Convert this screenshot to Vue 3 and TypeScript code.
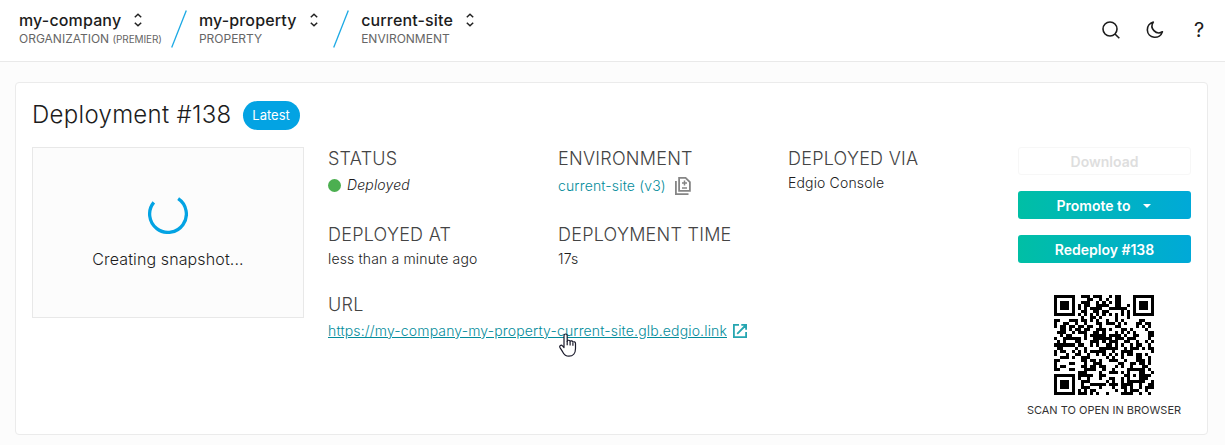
<script setup lang="ts">
interface Crumb { name: string; kind: string; note?: string }

const crumbs: Crumb[] = [
  { name: 'my-company', kind: 'ORGANIZATION', note: '(PREMIER)' },
  { name: 'my-property', kind: 'PROPERTY' },
  { name: 'current-site', kind: 'ENVIRONMENT' },
]
const siteUrl = 'https://my-company-my-property-current-site.glb.edgio.link'

// Version 4 QR code, byte mode, error correction level L
const SIZE = 33

function gfMul(a: number, b: number): number {
  let r = 0
  for (let i = 7; i >= 0; i--) {
    r = (r << 1) ^ ((r >>> 7) * 0x11d)
    r ^= ((b >>> i) & 1) * a
  }
  return r
}

function ecc(data: number[], degree: number): number[] {
  const gen: number[] = new Array(degree).fill(0)
  gen[degree - 1] = 1
  let root = 1
  for (let i = 0; i < degree; i++) {
    for (let j = 0; j < degree; j++) {
      gen[j] = gfMul(gen[j], root)
      if (j + 1 < degree) gen[j] ^= gen[j + 1]
    }
    root = gfMul(root, 2)
  }
  const res: number[] = new Array(degree).fill(0)
  for (const d of data) {
    const f = d ^ (res.shift() as number)
    res.push(0)
    gen.forEach((g, i) => { res[i] ^= gfMul(g, f) })
  }
  return res
}

const masks: ((x: number, y: number) => boolean)[] = [
  (x, y) => (x + y) % 2 === 0,
  (_x, y) => y % 2 === 0,
  (x) => x % 3 === 0,
  (x, y) => (x + y) % 3 === 0,
  (x, y) => (Math.floor(x / 3) + Math.floor(y / 2)) % 2 === 0,
  (x, y) => ((x * y) % 2) + ((x * y) % 3) === 0,
  (x, y) => (((x * y) % 2) + ((x * y) % 3)) % 2 === 0,
  (x, y) => (((x + y) % 2) + ((x * y) % 3)) % 2 === 0,
]

function encode(text: string, mask: number): boolean[][] {
  const bits: number[] = []
  const put = (v: number, n: number) => { for (let i = n - 1; i >= 0; i--) bits.push((v >>> i) & 1) }
  put(4, 4)
  put(text.length, 8)
  for (const c of text) put(c.charCodeAt(0), 8)
  put(0, 4)
  const data: number[] = []
  for (let i = 0; i < bits.length; i += 8) data.push(parseInt(bits.slice(i, i + 8).join(''), 2))
  for (let pad = 0xec; data.length < 80; pad ^= 0xec ^ 0x11) data.push(pad)
  const words = data.concat(ecc(data, 20))

  const m: boolean[][] = Array.from({ length: SIZE }, () => new Array(SIZE).fill(false))
  const fixed: boolean[][] = Array.from({ length: SIZE }, () => new Array(SIZE).fill(false))
  const set = (x: number, y: number, v: boolean) => {
    if (x < 0 || y < 0 || x >= SIZE || y >= SIZE) return
    m[y][x] = v
    fixed[y][x] = true
  }
  for (let i = 0; i < SIZE; i++) { set(6, i, i % 2 === 0); set(i, 6, i % 2 === 0) }
  for (const [cx, cy] of [[3, 3], [SIZE - 4, 3], [3, SIZE - 4]]) {
    for (let dy = -4; dy <= 4; dy++) for (let dx = -4; dx <= 4; dx++) {
      const d = Math.max(Math.abs(dx), Math.abs(dy))
      set(cx + dx, cy + dy, d !== 2 && d !== 4)
    }
  }
  for (let dy = -2; dy <= 2; dy++) for (let dx = -2; dx <= 2; dx++) {
    set(26 + dx, 26 + dy, Math.max(Math.abs(dx), Math.abs(dy)) !== 1)
  }
  const fmt = (1 << 3) | mask
  let rem = fmt
  for (let i = 0; i < 10; i++) rem = (rem << 1) ^ ((rem >>> 9) * 0x537)
  const f = ((fmt << 10) | rem) ^ 0x5412
  const bit = (i: number) => ((f >>> i) & 1) === 1
  for (let i = 0; i <= 5; i++) set(8, i, bit(i))
  set(8, 7, bit(6)); set(8, 8, bit(7)); set(7, 8, bit(8))
  for (let i = 9; i < 15; i++) set(14 - i, 8, bit(i))
  for (let i = 0; i < 8; i++) set(SIZE - 1 - i, 8, bit(i))
  for (let i = 8; i < 15; i++) set(8, SIZE - 15 + i, bit(i))
  set(8, SIZE - 8, true)

  let k = 0
  for (let right = SIZE - 1; right >= 1; right -= 2) {
    if (right === 6) right = 5
    for (let v = 0; v < SIZE; v++) for (let j = 0; j < 2; j++) {
      const x = right - j
      const y = ((right + 1) & 2) === 0 ? SIZE - 1 - v : v
      if (fixed[y][x]) continue
      const on = k < words.length * 8 && ((words[k >>> 3] >>> (7 - (k & 7))) & 1) === 1
      k++
      m[y][x] = on !== masks[mask](x, y)
    }
  }
  return m
}

// Mask selection by the standard penalty rules
function penalty(m: boolean[][]): number {
  let p = 0
  let dark = 0
  const lines = [...m, ...m.map((_, i) => m.map(r => r[i]))]
  for (const line of lines) {
    const s = line.map(v => (v ? '1' : '0')).join('')
    for (const run of s.match(/0{5,}|1{5,}/g) ?? []) p += run.length - 2
    for (let i = 0; i + 11 <= SIZE; i++) {
      const t = s.slice(i, i + 11)
      if (t === '10111010000' || t === '00001011101') p += 40
    }
  }
  for (let y = 0; y < SIZE; y++) for (let x = 0; x < SIZE; x++) {
    if (m[y][x]) dark++
    if (x < SIZE - 1 && y < SIZE - 1 && m[y][x] === m[y][x + 1] && m[y][x] === m[y + 1][x] && m[y][x] === m[y + 1][x + 1]) p += 3
  }
  return p + Math.floor(Math.abs((dark * 100) / (SIZE * SIZE) - 50) / 5) * 10
}

const qr = masks.map((_, i) => encode(siteUrl, i)).reduce((a, b) => (penalty(b) < penalty(a) ? b : a))
const qrPath = qr.map((row, y) => row.map((on, x) => (on ? `M${x} ${y}h1v1h-1z` : '')).join('')).join('')
</script>

<template>
  <div class="page">
    <header class="topbar">
      <template v-for="(c, i) in crumbs" :key="c.name">
        <svg v-if="i > 0" class="slash" width="16" height="38" viewBox="0 0 16 38"><path d="M15.300 .5L.7 37.500" stroke="#1ba9e4" stroke-width="1.300" /></svg>
        <div class="crumb">
          <div class="crumb-name"><span>{{ c.name }}</span>
            <svg width="8" height="14" viewBox="0 0 8 14" fill="none" stroke="#222" stroke-width="1.500"><path d="M.8 4.200L4 1.200l3.200 3M.8 9.800L4 12.800l3.200-3" /></svg>
          </div>
          <div class="crumb-kind">{{ c.kind }} <small v-if="c.note">{{ c.note }}</small></div>
        </div>
      </template>
      <div class="tools">
        <svg width="20" height="20" viewBox="0 0 20 20" fill="none" stroke="#1c1c1c" stroke-width="1.600"><circle cx="9" cy="9" r="7" /><path d="M14 14l4.300 4.300" /></svg>
        <svg width="20" height="20" viewBox="0 0 20 20" fill="none" stroke="#1c1c1c" stroke-width="1.600" stroke-linejoin="round"><path d="M8.300 2.100A7.700 7.700 0 1 0 17.400 11.800A6.800 6.800 0 0 1 8.300 2.100z" /></svg>
        <span class="help">?</span>
      </div>
    </header>
    <main class="card">
      <div class="title-row"><h1>Deployment #138</h1><span class="pill">Latest</span></div>
      <div class="body">
        <div class="snapshot">
          <svg width="40" height="40" viewBox="22 22 44 44"><path d="M55.180 27.180A20.200 20.200 0 1 1 28.390 31.180" fill="none" stroke="#03a3e3" stroke-width="3.600" stroke-linecap="butt" /></svg>
          <span>Creating snapshot...</span>
        </div>
        <div class="details">
          <section><h2>STATUS</h2><div class="value status"><i class="dot"></i><em>Deployed</em></div></section>
          <section><h2>ENVIRONMENT</h2>
            <div class="value env"><a>current-site (v3)</a>
              <svg width="18" height="20" viewBox="0 0 18 20" fill="none" stroke="#858585" stroke-width="1.800"><path d="M5.100 1.900h6.500l4.300 4.300v8.600H5.100zM1.900 5v13.100h12.600" /><path d="M8 6.900h5M10.500 4.400v5M8 11.900h5" stroke-width="1.500" /></svg>
            </div>
          </section>
          <section><h2>DEPLOYED VIA</h2><div class="value">Edgio Console</div></section>
          <section><h2>DEPLOYED AT</h2><div class="value">less than a minute ago</div></section>
          <section class="rest"><h2>DEPLOYMENT TIME</h2><div class="value">17s</div></section>
          <section class="wide"><h2>URL</h2>
            <div class="value url"><a>{{ siteUrl }}</a>
              <svg width="14" height="14" viewBox="0 0 14 14" fill="none" stroke="#26a6b1" stroke-width="1.800"><path d="M6 .9H.9v12.200h12.200V8M8.300 .9h4.800v4.800M13 1L4.200 9.800" /></svg>
              <svg class="pointer" width="18" height="24" viewBox="0 0 18 24"><path d="M5 14.500V2.700c0-2.300 3.200-2.300 3.200 0v5.500c.5-1.400 2.700-1.200 2.900.4c.6-1.200 2.600-.9 2.800.6c.8-.9 2.600-.4 2.600 1.200v5.100c0 4.500-2.400 7.700-6.600 7.700c-3.200 0-4.800-1.500-6.200-4.300L1 14.600c-1-2 1.200-3.200 2.500-1.700z" fill="#fff" stroke="#1a1a2b" stroke-width="1.200" stroke-linejoin="round" /><path d="M8.200 8v4.200M11.100 9v3.500M13.900 9.800v3" stroke="#1a1a2b" stroke-width="1.200" /></svg>
            </div>
          </section>
        </div>
        <aside class="actions">
          <button class="btn off">Download</button>
          <button class="btn">Promote to<i class="caret"></i></button>
          <button class="btn">Redeploy #138</button>
          <svg class="qr" width="100" height="100" viewBox="0 0 33 33" shape-rendering="crispEdges"><path :d="qrPath" fill="#000" /></svg>
          <span class="scan">SCAN TO OPEN IN BROWSER</span>
        </aside>
      </div>
    </main>
  </div>
</template>

<style>
body { margin: 0; background: #fcfcfc; overflow: hidden; }
</style>
<style scoped>
* { box-sizing: border-box; }
svg { display: block; flex: none; }
.page { height: 445px; background: #fcfcfc; font-family: Inter, "Liberation Sans", sans-serif; color: #1c1c1c; font-size: 14px; }
.topbar { height: 62px; padding: 10px 16px 0 19px; display: flex; background: #fff; border-bottom: 1px solid #e9e9e9; }
.crumb-name { display: flex; gap: 13px; align-items: center; height: 20px; font-size: 16px; font-weight: 500; letter-spacing: .15px; line-height: 20px; }
.crumb-kind { font-size: 12px; line-height: 17px; color: #666; white-space: nowrap; }
.crumb-kind small { font-size: 10px; letter-spacing: -.1px; }
.slash { margin: 0 12px 0 9px; }
.crumb + .slash ~ .crumb + .slash { margin-left: 15.500px; }
.tools { margin-left: auto; display: flex; gap: 24px; padding-top: 10px; height: 30px; }
.help { width: 20px; text-align: center; font-size: 20px; line-height: 20px; }
.card { margin: 20px 17px 0 15px; height: 353px; padding: 16px; background: #fff; border: 1px solid #ebebeb; border-radius: 4px; }
.title-row { display: flex; height: 32px; gap: 11px; margin-bottom: 16px; }
h1 { margin: 0; font-size: 24px; line-height: 32px; font-weight: 300; letter-spacing: .3px; }
.pill { margin-top: 2px; height: 29px; width: 57px; border-radius: 15px; background: #03a3e3; color: #fff; font-size: 13px; line-height: 29px; text-align: center; }
.body { display: flex; }
.snapshot { width: 272px; height: 171px; border: 1px solid #e8e8e8; background: #fcfcfc; display: flex; flex-direction: column; align-items: center; padding-top: 46px; gap: 15px; font-size: 16px; line-height: 20px; font-weight: 300; letter-spacing: .12px; }
.details { margin-left: 24px; width: 690px; display: grid; grid-template-columns: repeat(3, 230px); grid-template-rows: 76px 70px auto; align-content: start; }
.wide { grid-column: 1 / -1; }
.rest { grid-column: 2 / -1; }
h2 { margin: 0 0 2px; font-size: 18px; line-height: 24px; font-weight: 300; color: #444; letter-spacing: .25px; }
.value { line-height: 20px; display: flex; align-items: center; white-space: nowrap; font-weight: 300; letter-spacing: .15px; }
.status { padding-top: 2px; gap: 6px; }
.dot { width: 13px; height: 13px; border-radius: 50%; background: #4caf50; }
.env { padding-top: 3px; gap: 8px; }
.url { position: relative; padding-top: 2px; gap: 6px; }
a { color: #038c9b; }
.url a { text-decoration: underline; }
.pointer { position: absolute; left: 231px; top: 14px; }
.actions { width: 173px; display: flex; flex-direction: column; align-items: center; }
.btn { width: 173px; height: 28px; margin: 0 0 16px; padding: 0; border: 0; border-radius: 3px; display: flex; align-items: center; justify-content: center; font: 600 14px Inter, sans-serif; color: #fff; background: linear-gradient(90deg, #00bfa5, #00a9d8); }
.off { background: #fff; border: 1px solid #f7f7f7; color: #dedede; }
.caret { margin: 1px 1px 0 13px; border: 4.500px solid transparent; border-top-color: #fff; border-bottom: 0; }
.qr { margin: 16px 1px 0 0; }
.scan { margin: 8px 1px 0 0; font-size: 11px; line-height: 14px; color: #333; white-space: nowrap; }
</style>
